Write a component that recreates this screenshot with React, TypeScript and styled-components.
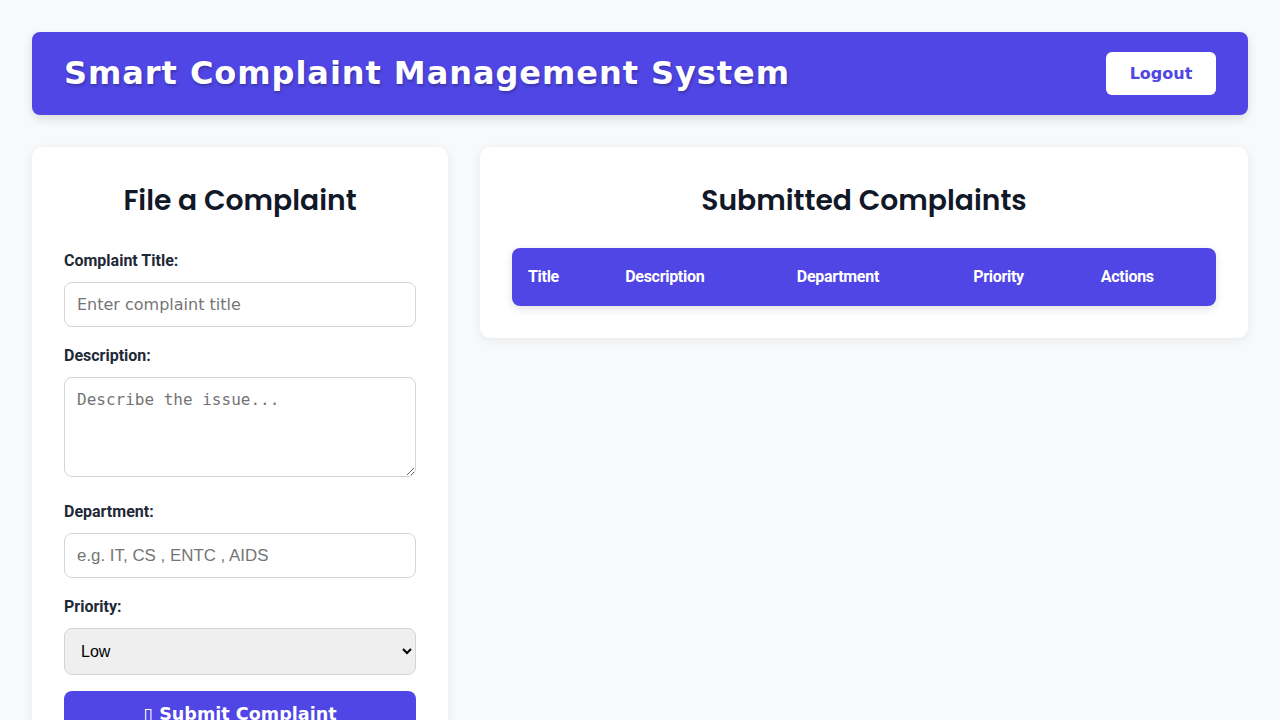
import React from "react";
import styled, { createGlobalStyle } from "styled-components";

const Global = createGlobalStyle`
  * { box-sizing: border-box; }
  html, body { margin: 0; padding: 0; }
  body {
    background: #f8f9fb;
    font-family: Roboto, "Liberation Sans", sans-serif;
    color: #1f2937;
  }
`;

const Page = styled.div`
  padding: 32px;
`;

const Header = styled.header`
  display: flex;
  align-items: center;
  justify-content: space-between;
  height: 83px;
  padding: 0 32px;
  background: #4f46e5;
  border-radius: 8px;
  box-shadow: 0 4px 10px rgba(0, 0, 0, 0.12);
`;

const Title = styled.h1`
  margin: 0 0 2px;
  font-family: "DejaVu Sans", sans-serif;
  font-weight: bold;
  font-size: 32px;
  letter-spacing: 0.95px;
  color: #ffffff;
  text-shadow: 1px 2px 3px rgba(0, 0, 0, 0.25);
`;

const LogoutButton = styled.button`
  width: 110px;
  height: 43px;
  border: none;
  border-radius: 6px;
  background: #ffffff;
  color: #4f46e5;
  font-family: "DejaVu Sans", sans-serif;
  font-weight: bold;
  font-size: 16px;
  cursor: pointer;
`;

const Main = styled.main`
  display: grid;
  grid-template-columns: 416px 1fr;
  gap: 32px;
  margin-top: 32px;
  align-items: start;
`;

const Card = styled.section`
  background: #ffffff;
  border-radius: 10px;
  padding: 32px;
  box-shadow: 0 2px 10px rgba(0, 0, 0, 0.07);
`;

const CardTitle = styled.h2`
  margin: 0 0 27px;
  text-align: center;
  font-family: Poppins, Inter, sans-serif;
  font-weight: 600;
  font-size: 28.2px;
  line-height: 42px;
  color: #111827;
`;

const Form = styled.form`
  padding-top: 3px;
`;

const Label = styled.label`
  display: block;
  font-family: Roboto, sans-serif;
  font-weight: bold;
  font-size: 16px;
  line-height: 19px;
  color: #1f2937;
  margin-bottom: 12px;
`;

const Field = styled.div<{ $gap: number }>`
  margin-bottom: ${(p) => p.$gap}px;
`;

const TextInput = styled.input<{ $font?: string; $size?: number }>`
  display: block;
  width: 100%;
  height: 45px;
  padding: 0 12px;
  border: 1px solid #d1d5db;
  border-radius: 8px;
  font-family: ${(p) => p.$font || '"DejaVu Sans", sans-serif'};
  font-size: ${(p) => p.$size || 16}px;
  color: #111827;
  background: #ffffff;
  &::placeholder { color: #757575; }
`;

const TextArea = styled.textarea`
  display: block;
  width: 100%;
  height: 100px;
  padding: 12px;
  border: 1px solid #d1d5db;
  border-radius: 8px;
  font-family: "DejaVu Sans Mono", monospace;
  font-size: 16px;
  resize: vertical;
  &::placeholder { color: #757575; }
`;

const Select = styled.select`
  display: block;
  width: 100%;
  height: 47px;
  padding: 0 12px;
  border: 1px solid #d1d5db;
  border-radius: 8px;
  background: #efefef;
  font-family: "Liberation Sans", Arial, sans-serif;
  font-size: 16px;
  color: #000;
`;

const SubmitButton = styled.button`
  display: block;
  width: 100%;
  height: 48px;
  padding: 0 0 2px;
  border: none;
  border-radius: 8px;
  background: #4f46e5;
  color: #ffffff;
  font-family: "DejaVu Sans", sans-serif;
  font-weight: bold;
  font-size: 17.6px;
  cursor: pointer;
`;

const Table = styled.table`
  width: 100%;
  border-collapse: collapse;
  border-radius: 8px;
  overflow: hidden;
  box-shadow: 0 3px 8px rgba(0, 0, 0, 0.12);
`;

const Th = styled.th`
  background: #4f46e5;
  color: #ffffff;
  text-align: left;
  height: 58px;
  padding: 0 16px 1px;
  font-family: Roboto, sans-serif;
  font-weight: bold;
  font-size: 16px;
  letter-spacing: -0.3px;
`;

const columns = ["Title", "Description", "Department", "Priority", "Actions"];

export default function App() {
  return (
    <>
      <Global />
      <Page>
        <Header>
          <Title>Smart Complaint Management System</Title>
          <LogoutButton>Logout</LogoutButton>
        </Header>
        <Main>
          <Card>
            <CardTitle>File a Complaint</CardTitle>
            <Form>
              <Field $gap={19}>
                <Label>Complaint Title:</Label>
                <TextInput placeholder="Enter complaint title" />
              </Field>
              <Field $gap={25}>
                <Label>Description:</Label>
                <TextArea placeholder="Describe the issue..." />
              </Field>
              <Field $gap={19}>
                <Label>Department:</Label>
                <TextInput
                  $font='"Liberation Sans", Arial, sans-serif'
                  $size={16.9}
                  placeholder="e.g. IT, CS , ENTC , AIDS"
                />
              </Field>
              <Field $gap={16}>
                <Label>Priority:</Label>
                <Select defaultValue="Low">
                  <option>Low</option>
                  <option>Medium</option>
                  <option>High</option>
                </Select>
              </Field>
              <SubmitButton type="button">▯ Submit Complaint</SubmitButton>
            </Form>
          </Card>
          <Card>
            <CardTitle>Submitted Complaints</CardTitle>
            <Table>
              <thead>
                <tr>
                  {columns.map((c) => (
                    <Th key={c}>{c}</Th>
                  ))}
                </tr>
              </thead>
              <tbody />
            </Table>
          </Card>
        </Main>
      </Page>
    </>
  );
}
